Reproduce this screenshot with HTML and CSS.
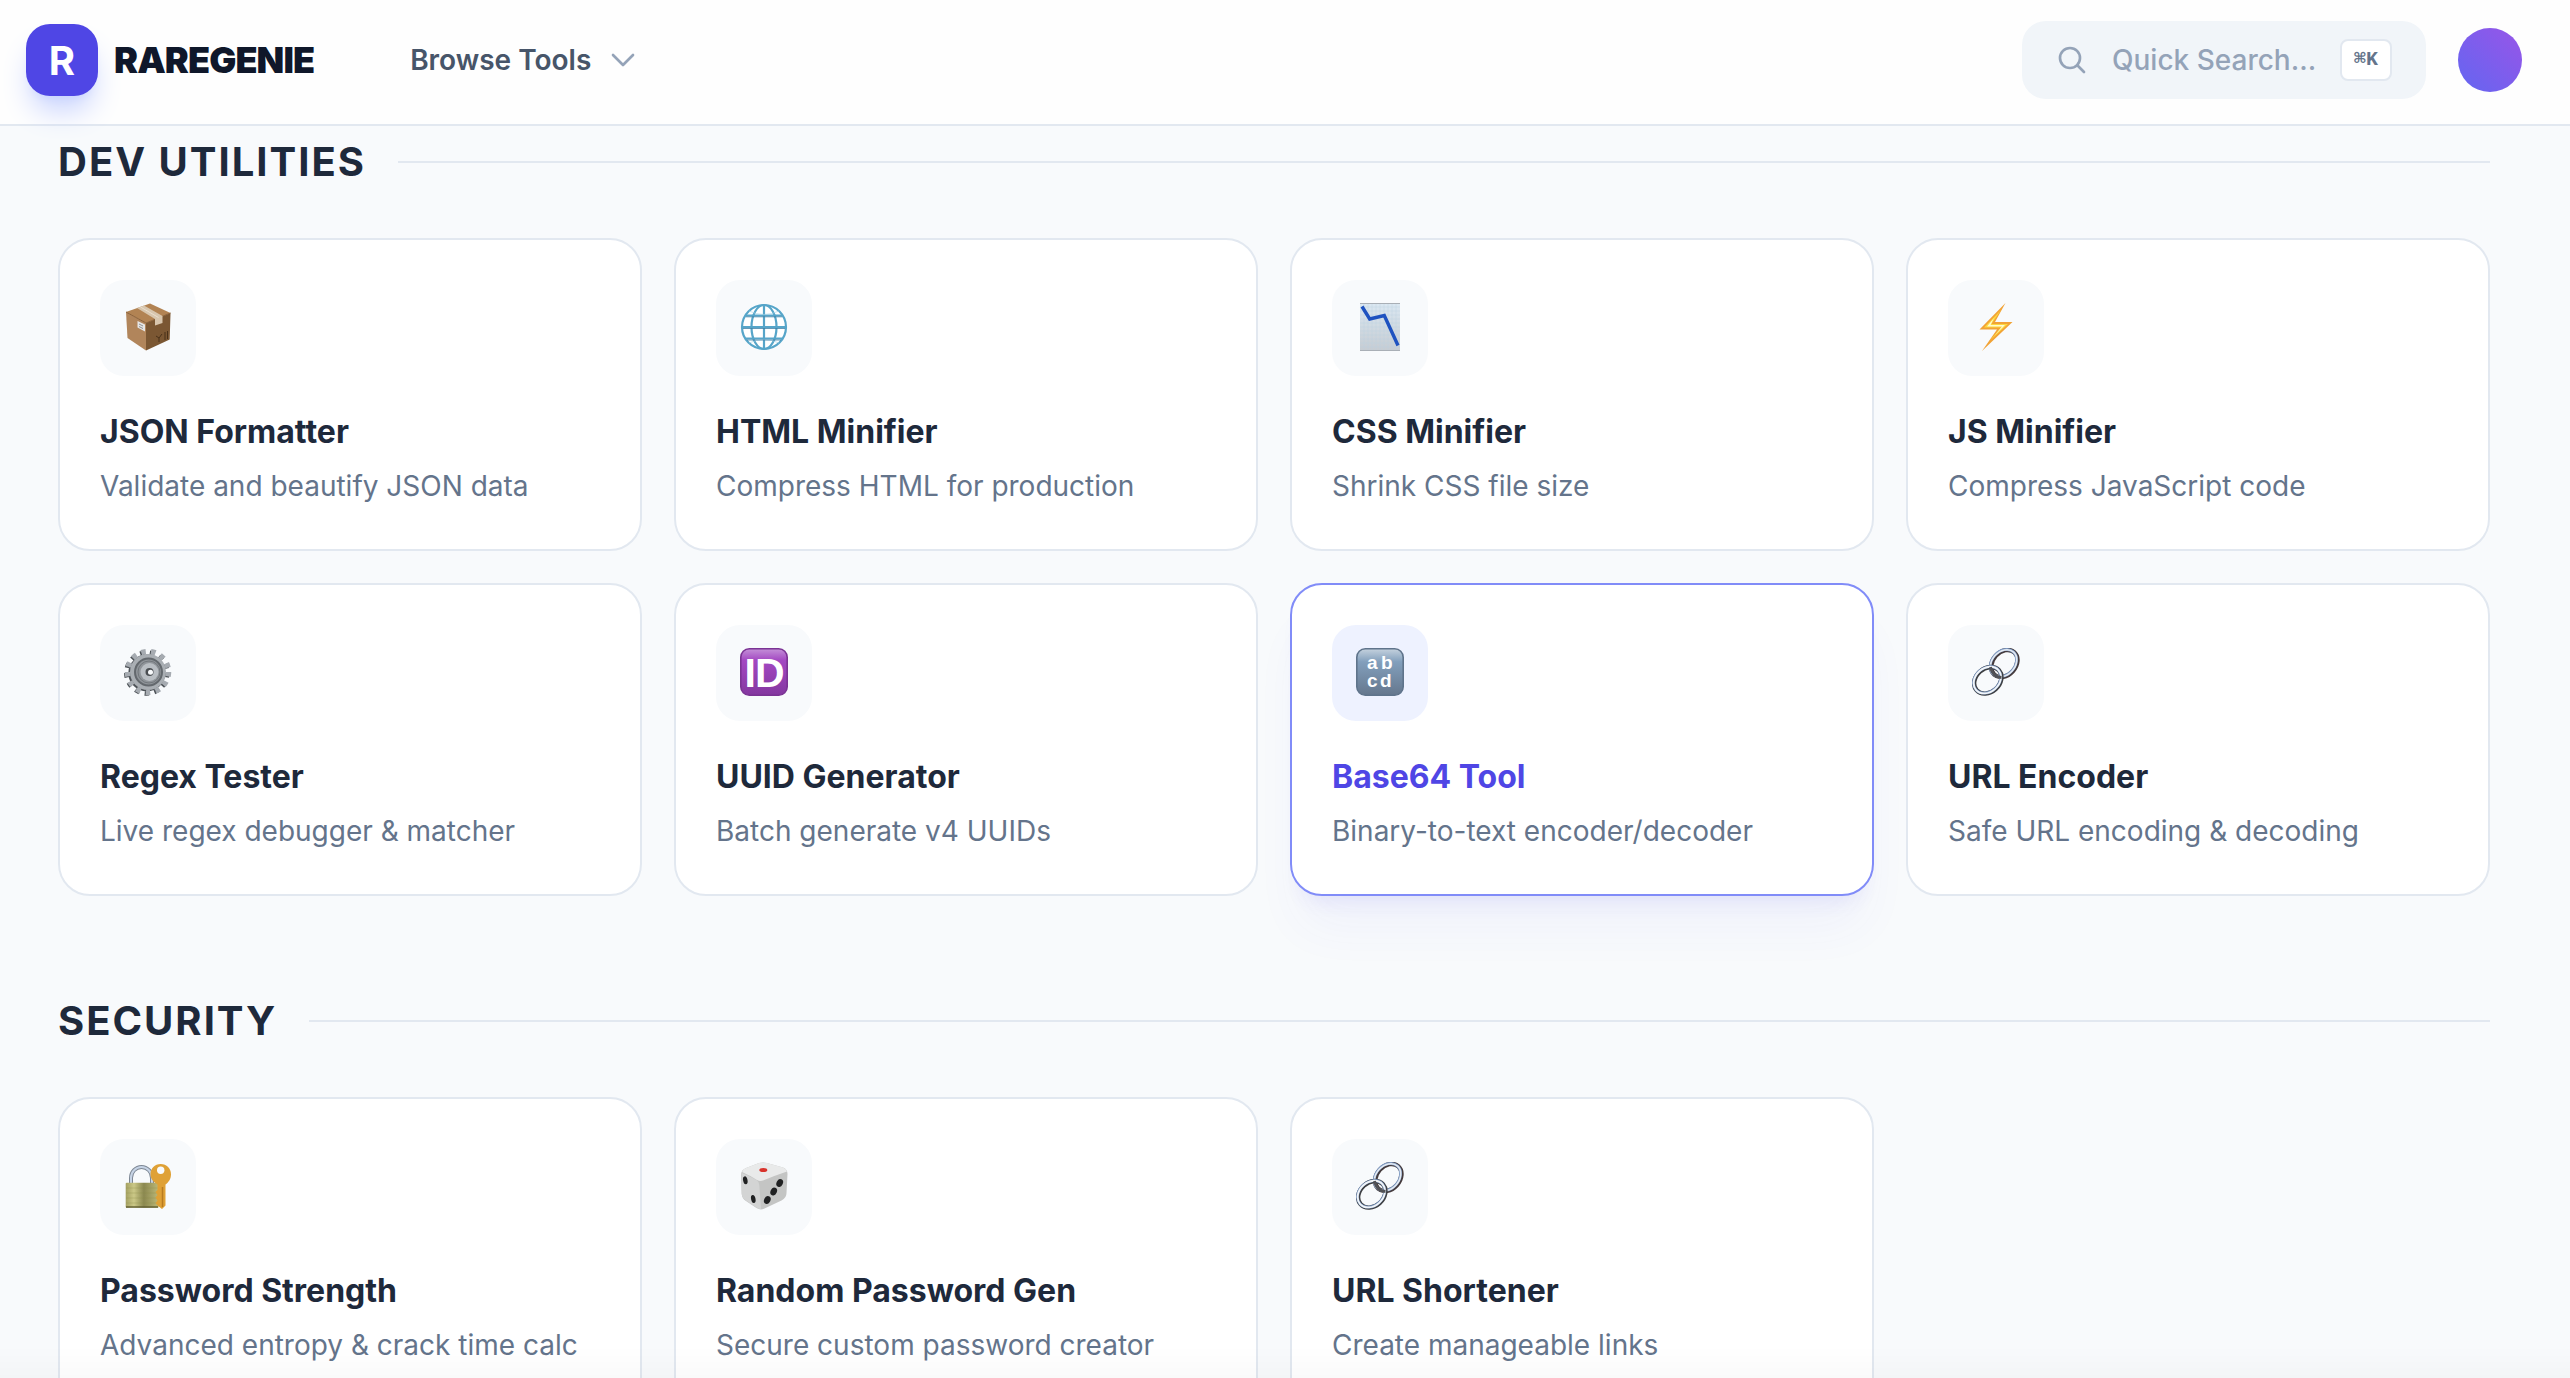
FILE: index.html
```html
<!DOCTYPE html>
<html lang="en">

<head>
    <meta charset="UTF-8">
    <meta name="viewport" content="width=device-width, initial-scale=1.0">
    <title>RareGenie</title>
    <link rel="stylesheet" href="styles.css">
</head>

<body>
    <header class="navbar">
        <a href="#" class="brand">
            <span class="brand-mark">R</span>
            <span class="brand-name">RAREGENIE</span>
        </a>
        <button type="button" class="browse-btn">
            Browse Tools
            <svg class="nav-icon" viewBox="0 0 24 24"><path d="M19.5 8.25l-7.5 7.5-7.5-7.5"/></svg>
        </button>
        <div class="nav-right">
            <label class="search" for="quick-search">
                <svg class="nav-icon" viewBox="0 0 24 24"><path d="M21 21l-5.2-5.2M18 10.5a7.5 7.5 0 1 1-15 0a7.5 7.5 0 0 1 15 0z"/></svg>
                <input type="text" id="quick-search" placeholder="Quick Search..." aria-label="Quick search">
                <kbd>⌘K</kbd>
            </label>
            <button type="button" class="avatar" aria-label="Account"></button>
        </div>
    </header>

    <main>
        <section>
            <h2 class="section-title">DEV UTILITIES</h2>
            <div class="grid">
                <a href="#" class="card">
                    <span class="tile">
                        <svg viewBox="0 0 48 48">
                            <polygon points="2,9 26,0.5 46.5,10 22,20" fill="#b28353"/>
                            <polygon points="2,9 22,20 22,47.5 3.5,35" fill="#b1855b"/>
                            <polygon points="22,20 46.5,10 45.7,36.5 22,47.5" fill="#7b5733"/>
                            <path d="M2 9l20 11l24.500-10" fill="none" stroke="#8b623a"/>
                            <polygon points="13,5 20,2.500 38.500,13 38.500,20 31,22.500 31,16" fill="#d8c6ae"/>
                            <path d="M16.500 4l18 10.500" stroke="#eadfce"/>
                            <polygon points="13.500,18 21,21.500 21,28.500 13.500,24.500" fill="#e6e6e6"/>
                            <path d="M15 21l4 2M15 23.500l4 2" stroke="#909090"/>
                            <path d="M32 33l3 2l3-4M35 35v4M41 29v8M43.500 28v8" stroke="#493119" fill="none"/>
                        </svg>
                    </span>
                    <h3>JSON Formatter</h3>
                    <p>Validate and beautify JSON data</p>
                </a>
                <a href="#" class="card">
                    <span class="tile">
                        <svg viewBox="0 0 48 48" fill="none" stroke="#56a5c9" stroke-width="2.2">
                            <circle cx="24" cy="24" r="22" fill="#fff"/>
                            <ellipse cx="24" cy="24" rx="12.500" ry="22"/>
                            <path d="M24 2v44M2 24h44M6 12.500h36M6 35.500h36"/>
                            <path d="M9 8q15 7 30 0M9 40q15-7 30 0" stroke="#a5d3e6" stroke-width="0.600"/>
                            <path d="M6 13.800h36M3 25.500h42M7 37h34" stroke="#3c7fa5" stroke-width="0.800"/>
                        </svg>
                    </span>
                    <h3>HTML Minifier</h3>
                    <p>Compress HTML for production</p>
                </a>
                <a href="#" class="card">
                    <span class="tile">
                        <svg viewBox="0 0 48 48">
                            <linearGradient id="sheet" x2="0" y2="1"><stop stop-color="#dbe8f2"/><stop offset="1" stop-color="#c6ccd2"/></linearGradient>
                            <rect x="4" width="40" height="48" fill="url(#sheet)"/>
                            <path d="M8 0v48M12 0v48M16 0v48M20 0v48M24 0v48M28 0v48M32 0v48M36 0v48M40 0v48M4 4h40M4 8h40M4 12h40M4 16h40M4 20h40M4 24h40M4 28h40M4 32h40M4 36h40M4 40h40M4 44h40" stroke="#bccfdd" stroke-width="0.400"/>
                            <path d="M4 .5h40M4 47.500h40" stroke="#a9afb6"/>
                            <path d="M6 3.500l7.700 12.500l14.600-3.500l13.700 30" fill="none" stroke="#1e52c0" stroke-width="3.400"/>
                        </svg>
                    </span>
                    <h3>CSS Minifier</h3>
                    <p>Shrink CSS file size</p>
                </a>
                <a href="#" class="card">
                    <span class="tile">
                        <svg viewBox="0 0 48 48">
                            <polygon points="33.500,0 7.500,26.500 25,26.500 10,48 40.500,19 23,19" fill="#f2a336"/>
                            <polygon points="29,7 12,24.500 29,24.500 18,37.500 36,21 19.500,21" fill="#fcd83f"/>
                            <polygon points="22,15 15,23.500 30,23.500 23,32 33,22 18.500,22" fill="#fffbd0"/>
                        </svg>
                    </span>
                    <h3>JS Minifier</h3>
                    <p>Compress JavaScript code</p>
                </a>
                <a href="#" class="card">
                    <span class="tile">
                        <svg viewBox="0 0 48 48" fill="none">
                            <circle cx="22.800" cy="25" r="20.500" stroke="#4d5257" stroke-width="4.500" stroke-dasharray="4.500 5.408"/>
                            <circle cx="22.800" cy="25" r="16" stroke="#4d5257" stroke-width="5"/>
                            <circle cx="24" cy="24" r="20.500" stroke="#a6abb1" stroke-width="5.500" stroke-dasharray="4.500 5.408"/>
                            <circle cx="24" cy="24" r="18" fill="#a9aeb3"/>
                            <circle cx="24.500" cy="24" r="13.500" fill="#8f9499" stroke="#63686d" stroke-width="2"/>
                            <circle cx="25" cy="24" r="11" stroke="#72777c"/>
                            <circle cx="25.500" cy="24" r="9" fill="#b9bec3"/>
                            <circle cx="25.500" cy="24" r="4" fill="#4a4e52"/>
                            <circle cx="26.500" cy="24.300" r="2.500" fill="#f8fafc"/>
                        </svg>
                    </span>
                    <h3>Regex Tester</h3>
                    <p>Live regex debugger &amp; matcher</p>
                </a>
                <a href="#" class="card">
                    <span class="tile">
                        <svg viewBox="0 0 48 48">
                            <linearGradient id="violet" x2="0" y2="1"><stop stop-color="#c490d8"/><stop offset=".25" stop-color="#a348c2"/><stop offset="1" stop-color="#84379f"/></linearGradient>
                            <rect x="0.800" y="0.800" width="46.400" height="46.400" rx="8.500" fill="url(#violet)" stroke="#7b3394" stroke-width="1.600"/>
                            <text x="4.500 15" y="39" class="glyph-id">ID</text>
                        </svg>
                    </span>
                    <h3>UUID Generator</h3>
                    <p>Batch generate v4 UUIDs</p>
                </a>
                <a href="#" class="card active">
                    <span class="tile">
                        <svg viewBox="0 0 48 48">
                            <linearGradient id="steel" x2="0" y2="1"><stop stop-color="#c5d2de"/><stop offset=".28" stop-color="#829fbc"/><stop offset="1" stop-color="#65778d"/></linearGradient>
                            <rect x="0.800" y="0.800" width="46.400" height="46.400" rx="8.500" fill="url(#steel)" stroke="#5f748b" stroke-width="1.600"/>
                            <text x="11 25" y="21" class="glyph-abc">ab</text>
                            <text x="11 24" y="39" class="glyph-abc">cd</text>
                        </svg>
                    </span>
                    <h3>Base64 Tool</h3>
                    <p>Binary-to-text encoder/decoder</p>
                </a>
                <a href="#" class="card">
                    <span class="tile">
                        <svg viewBox="0 0 48 48" fill="none">
                            <g id="chain">
                                <g transform="rotate(-48 32.300 15.500)">
                                    <ellipse cx="32.300" cy="15.500" rx="15" ry="11.500" stroke="#453b3d" stroke-width="4.400"/>
                                    <ellipse cx="32" cy="14.500" rx="15" ry="11.500" stroke="#7f9cc6" stroke-width="2.800"/>
                                    <ellipse cx="32" cy="14.800" rx="15" ry="11.500" stroke="#e6ebf2" stroke-width="1.600"/>
                                </g>
                                <g transform="rotate(-42 15.800 32.300)">
                                    <ellipse cx="15.800" cy="32.300" rx="15" ry="11.800" stroke="#3f4043" stroke-width="4.400"/>
                                    <ellipse cx="15.600" cy="31.500" rx="15" ry="11.800" stroke="#7490bb" stroke-width="2.800"/>
                                    <ellipse cx="15.600" cy="31.800" rx="15" ry="11.800" stroke="#f2f5f8" stroke-width="1.900"/>
                                </g>
                                <path d="M18.500 19c1 6 5 10 11 10.500" stroke="#505156" stroke-width="2.800"/>
                            </g>
                        </svg>
                    </span>
                    <h3>URL Encoder</h3>
                    <p>Safe URL encoding &amp; decoding</p>
                </a>
            </div>
        </section>

        <section>
            <h2 class="section-title">SECURITY</h2>
            <div class="grid">
                <a href="#" class="card">
                    <span class="tile">
                        <svg viewBox="0 0 48 48">
                            <linearGradient id="brass"><stop stop-color="#a5a162"/><stop offset=".25" stop-color="#cbc887"/><stop offset=".55" stop-color="#8b8850"/><stop offset="1" stop-color="#bdb978"/></linearGradient>
                            <path d="M7 22v-6a10.500 11 0 0 1 21 0v6" fill="none" stroke="#7d8794" stroke-width="4"/>
                            <path d="M7 22v-6a10.500 11 0 0 1 21 0v6" fill="none" stroke="#c6d3e5" stroke-width="2"/>
                            <rect x="1.700" y="20.700" width="33" height="25" rx="1" fill="url(#brass)"/>
                            <path d="M2 26h32M2 31h32M2 36h32M2 41h32" stroke="#8b8848" stroke-width="0.300"/>
                            <path d="M2 45h32" stroke="#605d32" stroke-width="1.400"/>
                            <path d="M36.700 2c6 0 10.300 4.500 10.300 10.200c0 5-2.500 8-5.500 10.300v21l-3.500 3.500l-4.500-3.500l-2-2.500l2-2.500l-2-3l2-2.500l-2-3l2-2v-5.500c-4-2.500-7-5.500-7-10.300c0-5.700 4.200-10.200 10.200-10.200z" fill="#dfa136"/>
                            <path d="M38.500 25v20" stroke="#b87b20" stroke-width="1.500"/>
                            <circle cx="36.700" cy="8.300" r="3.700" fill="#f8fafc"/>
                        </svg>
                    </span>
                    <h3>Password Strength</h3>
                    <p>Advanced entropy &amp; crack time calc</p>
                </a>
                <a href="#" class="card">
                    <span class="tile">
                        <svg viewBox="0 0 48 48">
                            <path d="M1 13q0-5 5-7l13-5q4-1 8 0l16 4.500q4.500 1.500 4.500 6.500l-1 19q0 5-5 7.500l-17 8q-4 2-8-.500l-10.500-7q-4-2.500-4.300-7z" fill="#c4c5c4"/>
                            <path d="M1.500 11q4 1 15 7q2.500 1.500 2.800 5l1.700 24q-2 0-4.500-1.500l-10.500-7q-4-2.500-4.300-7z" fill="#d3d4d4"/>
                            <path d="M2 10q1-3 4-4l13-5q4-1 8 0l16 4.500q3 1 4 4q-12 4-24 9q-3 1-6-.500q-8-5-15-8z" fill="#e9eaea"/>
                            <ellipse cx="23.300" cy="8" rx="4" ry="2" fill="#d8332c"/>
                            <g fill="#202122">
                                <ellipse cx="5.300" cy="18.300" rx="2.200" ry="4" transform="rotate(-12 5.300 18.300)"/>
                                <ellipse cx="13.300" cy="37" rx="2.200" ry="4" transform="rotate(-12 13.300 37)"/>
                                <ellipse cx="39.700" cy="21" rx="3.200" ry="4" transform="rotate(25 39.700 21)"/>
                                <ellipse cx="33.700" cy="29.500" rx="3.200" ry="4" transform="rotate(25 33.700 29.500)"/>
                                <ellipse cx="27.300" cy="38" rx="3.200" ry="4" transform="rotate(25 27.300 38)"/>
                            </g>
                        </svg>
                    </span>
                    <h3>Random Password Gen</h3>
                    <p>Secure custom password creator</p>
                </a>
                <a href="#" class="card">
                    <span class="tile">
                        <svg viewBox="0 0 48 48" fill="none"><use href="#chain"/></svg>
                    </span>
                    <h3>URL Shortener</h3>
                    <p>Create manageable links</p>
                </a>
            </div>
        </section>
    </main>
    <div class="bottom-fade"></div>
</body>

</html>
```

FILE: styles.css
```css
* {
    box-sizing: border-box;
    margin: 0;
    padding: 0;
}

body {
    height: 100vh;
    overflow: hidden;
    background-color: #f8fafc;
    font-family: Inter, "Liberation Sans", sans-serif;
    font-size: 28px;
    color: #1e293b;
}

a {
    color: inherit;
    text-decoration: none;
}

button,
input {
    border: none;
    background: none;
    font: inherit;
    color: inherit;
    outline: none;
}

button {
    cursor: pointer;
}

/* top bar */
.navbar {
    position: sticky;
    top: 0;
    z-index: 10;
    display: flex;
    align-items: center;
    gap: 96px;
    height: 126px;
    padding: 0 48px 4px 26px;
    background-color: #fefefe;
    border-bottom: 2px solid #e2e8f0;
}

.brand {
    display: flex;
    align-items: center;
    gap: 16px;
}

.brand-mark {
    display: flex;
    align-items: center;
    justify-content: center;
    width: 72px;
    height: 72px;
    border-radius: 24px;
    background-color: #4f46e5;
    box-shadow: 0 20px 30px -6px #c7d2fe, 0 8px 12px -8px #c7d2fe;
    color: #fff;
    font-size: 40px;
    font-weight: 700;
}

.brand-name {
    font-size: 36px;
    font-weight: 900;
    letter-spacing: -0.025em;
    color: #0f172a;
}

.browse-btn {
    display: flex;
    align-items: center;
    gap: 16px;
    font-weight: 600;
    color: #475569;
}

.nav-icon {
    flex: none;
    width: 32px;
    height: 32px;
    fill: none;
    stroke: #94a3b8;
    stroke-width: 2;
    stroke-linecap: round;
    stroke-linejoin: round;
}

.nav-right {
    display: flex;
    align-items: center;
    gap: 32px;
    margin-left: auto;
}

.search {
    display: flex;
    align-items: center;
    gap: 24px;
    width: 404px;
    height: 78px;
    padding: 0 34px;
    border-radius: 24px;
    background-color: #f1f5f9;
}

.search input {
    flex: 1;
    min-width: 0;
    font-weight: 500;
}

.search input::placeholder {
    color: #94a3b8;
    opacity: 1;
}

.search kbd {
    padding: 0 12px;
    border: 2px solid #e2e8f0;
    border-radius: 8px;
    background-color: #fff;
    font-family: "Liberation Mono", "DejaVu Sans Mono", monospace;
    font-size: 20px;
    font-weight: 700;
    line-height: 38px;
    color: #64748b;
}

.avatar {
    width: 64px;
    height: 64px;
    border-radius: 50%;
    background: linear-gradient(to top right, #6366f1, #9855e8);
}

/* tool listing */
main {
    padding: 8px 80px 0 58px;
}

section {
    margin-bottom: 97px;
}

.section-title {
    display: flex;
    align-items: center;
    gap: 32px;
    margin-bottom: 48px;
    font-size: 40px;
    font-weight: 700;
    line-height: 56px;
    letter-spacing: 0.05em;
}

.section-title::after {
    content: "";
    flex: 1;
    height: 2px;
    background-color: #e2e8f0;
}

.grid {
    display: grid;
    grid-template-columns: repeat(4, 1fr);
    gap: 32px;
}

.card {
    padding: 40px;
    border: 2px solid #e2e8f0;
    border-radius: 32px;
    background-color: #fff;
}

.tile {
    display: flex;
    justify-content: center;
    width: 96px;
    height: 96px;
    margin-bottom: 32px;
    padding-top: 23px;
    border-radius: 24px;
    background-color: #f8fafc;
}

.tile svg {
    width: 48px;
    height: 48px;
}

.card h3 {
    margin-bottom: 8px;
    font-size: 32px;
    font-weight: 700;
    line-height: 48px;
}

.card p {
    line-height: 45px;
    color: #64748b;
}

.card.active {
    border-color: #818cf8;
    box-shadow: 0 40px 50px -10px rgba(79, 70, 229, 0.05), 0 16px 20px -12px rgba(79, 70, 229, 0.1);
}

.active .tile {
    background-color: #eef2ff;
}

.active h3 {
    color: #4f46e5;
}

.glyph-id,
.glyph-abc {
    font-family: "Liberation Sans", sans-serif;
    font-weight: 700;
    fill: #fff;
}

.glyph-id {
    font-size: 41px;
}

.glyph-abc {
    font-size: 19px;
}

.bottom-fade {
    position: fixed;
    right: 0;
    bottom: 0;
    left: 0;
    height: 32px;
    background: linear-gradient(rgba(0, 0, 0, 0), rgba(0, 0, 0, 0.02));
    pointer-events: none;
}
```
